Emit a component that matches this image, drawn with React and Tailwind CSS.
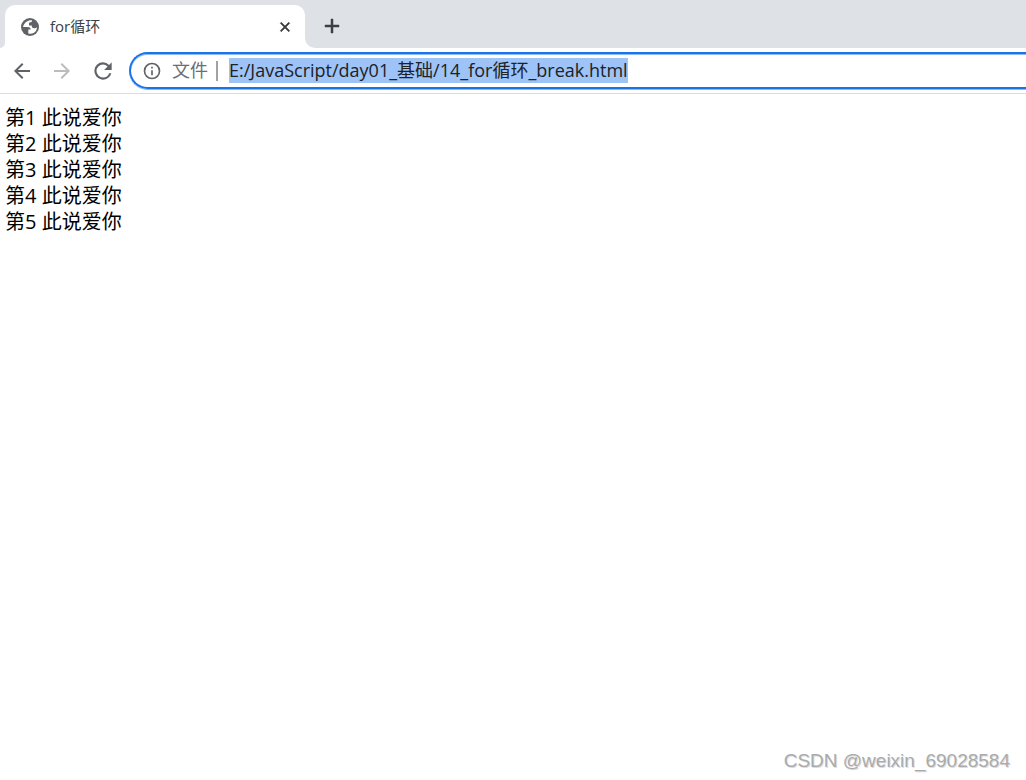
import { useState } from 'react'

const LINES = [1, 2, 3, 4, 5]

const Icon = ({ d, className }) => (
  <svg viewBox="0 0 24 24" fill="currentColor" className={className} aria-hidden="true">
    <path d={d} />
  </svg>
)

const ICONS = {
  back: 'M20 11H7.83l5.59-5.59L12 4l-8 8 8 8 1.41-1.41L7.83 13H20v-2z',
  forward: 'M12 4l-1.41 1.41L16.17 11H4v2h12.17l-5.58 5.59L12 20l8-8z',
  reload:
    'M17.65 6.35A7.958 7.958 0 0 0 12 4a8 8 0 1 0 7.73 10h-2.08A5.99 5.99 0 0 1 12 18a6 6 0 1 1 0-12c1.66 0 3.14.69 4.22 1.78L13 11h7V4l-2.35 2.35z',
  info: 'M11 17h2v-6h-2v6zm1-15a10 10 0 1 0 0 20 10 10 0 0 0 0-20zm0 18a8 8 0 1 1 0-16 8 8 0 0 1 0 16zM11 9h2V7h-2v2z',
  close: 'M19 6.41L17.59 5 12 10.59 6.41 5 5 6.41 10.59 12 5 17.59 6.41 19 12 13.41 17.59 19 19 17.59 13.41 12z',
  plus: 'M19 13h-6v6h-2v-6H5v-2h6V5h2v6h6v2z',
}

const Globe = () => (
  <svg viewBox="0 0 18 18" className="h-[18px] w-[18px] shrink-0" aria-hidden="true">
    <circle cx="9" cy="9" r="9" fill="#5f6368" />
    <path
      d="M11 2.200C9.500 2 6.500 2.500 4.500 4.500 3 6 2.200 7.500 2.100 9h4.400c2 0 3.200.8 3.200 2.600H7.300V15.500c3.500 1 7-.8 8.200-3.800.3-.8.4-1.700.4-2.500-.8.900-1.700 1.200-2.800 1.100-1.800-.1-2.300-1.300-2.400-2.800H8V5.300C8 4.500 8.800 4.200 9.700 4.200 10.700 4.200 11 3.500 11 2.200z"
      fill="#fff"
    />
  </svg>
)

const TabStrip = () => (
  <header className="flex h-12 items-end bg-[#dee1e6]">
    <div className="h-[43px] w-[5px] overflow-hidden bg-white">
      <div className="h-full rounded-br-lg bg-[#dee1e6]" />
    </div>
    <div className="flex h-[43px] w-[300px] items-center rounded-t-[10px] bg-white pr-3 pl-4">
      <Globe />
      <span className="ml-[11px] flex-1 truncate text-[15px] text-[#3c4043]">for循环</span>
      <button type="button" aria-label="Close tab" className="text-[#3c4043]">
        <Icon d={ICONS.close} className="h-4 w-4 stroke-current" />
      </button>
    </div>
    <div className="h-[10px] w-[10px] bg-white">
      <div className="h-full rounded-bl-[10px] bg-[#dee1e6]" />
    </div>
    <button type="button" aria-label="New tab" className="mb-[10px] ml-[5px] text-[#3c4043]">
      <Icon d={ICONS.plus} className="h-6 w-6 stroke-current stroke-[0.5]" />
    </button>
  </header>
)

const Toolbar = () => {
  const [url, setUrl] = useState('E:/JavaScript/day01_基础/14_for循环_break.html')

  return (
    <nav className="flex h-[46px] items-center border-b border-[#dadce0] pl-[10px]">
      <button type="button" aria-label="Back" className="text-[#5f6368]">
        <Icon d={ICONS.back} className="h-6 w-6" />
      </button>
      <button type="button" aria-label="Forward" disabled className="ml-4 text-[#babcbe]">
        <Icon d={ICONS.forward} className="h-6 w-6" />
      </button>
      <button type="button" aria-label="Reload" className="ml-4 text-[#5f6368]">
        <Icon d={ICONS.reload} className="h-[26px] w-[26px]" />
      </button>
      <div className="ml-[13px] flex h-[37px] min-w-0 flex-1 items-center rounded-l-full border-2 border-r-0 border-[#1a73e8] pl-[11px] text-[18px] shadow-[0_1px_0_#8ebaf4,inset_0_1px_0_#8ebaf4]">
        <Icon d={ICONS.info} className="h-5 w-5 shrink-0 text-[#5f6368]" />
        <label htmlFor="url" className="ml-[10px] shrink-0 text-[#6b6f74]">
          文件
        </label>
        <span className="mr-[11px] ml-2 h-5 w-[2px] shrink-0 bg-[#a0a2a5]" />
        <input
          id="url"
          type="text"
          value={url}
          onChange={(e) => setUrl(e.target.value)}
          spellCheck={false}
          className="h-[25px] max-w-full min-w-0 bg-[#9dc3f7] text-[#202124] outline-none [field-sizing:content]"
        />
      </div>
    </nav>
  )
}

const App = () => (
  <div className="flex min-h-screen flex-col bg-white font-['Open_Sans','Noto_Sans_CJK_SC',sans-serif]">
    <TabStrip />
    <Toolbar />
    <main className="flex-1 px-[5px] pt-[11px] text-[20px] leading-[26px] text-black">
      {LINES.map((n) => (
        <p key={n}>第{n} 此说爱你</p>
      ))}
    </main>
    <footer className="px-4 pb-[6px] text-right font-['Liberation_Sans',sans-serif] text-[19px] leading-[26px] text-[#aaa] [text-shadow:1px_1px_0_#ddd]">
      CSDN @weixin_69028584
    </footer>
  </div>
)

export default App
